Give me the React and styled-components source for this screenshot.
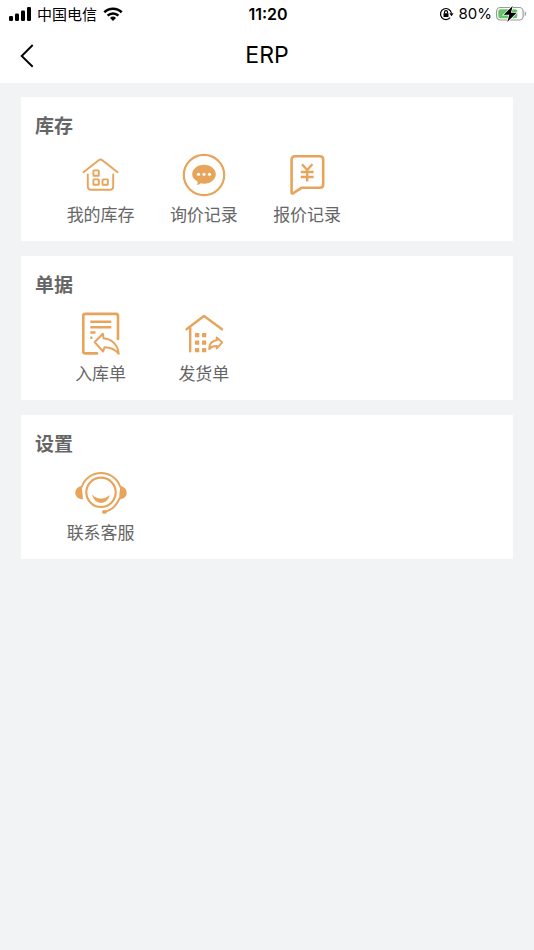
import React from "react";
import styled, { createGlobalStyle } from "styled-components";

const GlobalStyle = createGlobalStyle`
  * {
    box-sizing: border-box;
  }
  body {
    margin: 0;
    background: #f1f3f5;
    font-family: Inter, "Noto Sans CJK SC", sans-serif;
  }
`;

const Header = styled.header`
  background: white;
  color: black;
`;

const StatusBar = styled.div`
  display: grid;
  grid-template-columns: 1fr auto 1fr;
  align-items: center;
  height: 28px;
  padding: 0 7px 0 9px;
`;

const StatusGroup = styled.div`
  display: flex;
  align-items: center;
  gap: ${(props) => props.$gap}px;
  justify-content: ${(props) => (props.$end ? "flex-end" : "flex-start")};
`;

const Carrier = styled.span`
  font-family: "Noto Sans CJK SC", sans-serif;
  font-size: 15px;
  line-height: 20px;
`;

const Clock = styled.span`
  font-size: 16px;
  font-weight: 600;
  line-height: 20px;
`;

const Percent = styled.span`
  font-size: 15px;
  line-height: 20px;
`;

const NavBar = styled.div`
  display: grid;
  grid-template-columns: 1fr auto 1fr;
  align-items: center;
  height: 55px;
  padding: 0 16px 2px;
`;

const BackButton = styled.button`
  display: flex;
  justify-self: start;
  padding: 0;
  border: none;
  background: none;
  cursor: pointer;
`;

const PageTitle = styled.h1`
  margin: 0;
  font-size: 23px;
  font-weight: 400;
  line-height: 28px;
`;

const Main = styled.main`
  display: flex;
  flex-direction: column;
  gap: 15px;
  padding: 14px 21px;
`;

const Card = styled.section`
  padding: 14px 0 15px;
  background: white;
`;

const CardTitle = styled.h2`
  margin: 0 0 10px;
  padding: 0 14px;
  color: #666;
  font-family: "Noto Sans CJK SC", sans-serif;
  font-size: 19px;
  font-weight: 700;
  line-height: 28px;
`;

const Menu = styled.nav`
  display: grid;
  grid-template-columns: repeat(4, 1fr);
  padding: 0 51px 0 28px;
`;

const MenuLink = styled.a`
  display: flex;
  flex-direction: column;
  align-items: center;
  gap: 1px;
  color: #666;
  text-decoration: none;
`;

const MenuIcon = styled.svg`
  width: 60px;
  height: 52px;
  color: #e8a45b;
  fill: none;
  stroke: currentColor;
  stroke-linecap: round;
  stroke-linejoin: round;
`;

const MenuLabel = styled.span`
  font-family: "Noto Sans CJK SC", sans-serif;
  font-size: 17px;
  line-height: 24px;
  white-space: nowrap;
`;

const icons = {
  stock: (
    <g strokeWidth="1.9">
      <path d="M12.5 23.2 28 11q1.5-1.2 3 0l15.6 12.2" />
      <path d="M16.8 25.5v12q0 3.2 3.2 3.2h19q3.2 0 3.2-3.2v-12" />
      <rect x="22.4" y="21.4" width="5.4" height="5.4" rx="0.6" />
      <rect x="22.4" y="30.4" width="5.4" height="5.4" rx="0.6" />
      <rect x="31.5" y="30.4" width="5.4" height="5.4" rx="0.6" />
    </g>
  ),
  inquiry: (
    <>
      <circle cx="30" cy="26" r="20.2" strokeWidth="2.2" />
      <path
        d="M30 15.7c6.5 0 11.8 4.2 11.8 9.5S36.5 34.7 30 34.7c-1.3 0-2.3-.1-3.3-.4-1 1-2.2 1.500-3.900 1.500.8-.9 1-2.100.8-3.300-3.200-1.700-5.400-4.300-5.400-7.300 0-5.300 5.300-9.500 11.800-9.500z"
        fill="currentColor"
        stroke="none"
      />
      <g fill="white" stroke="none">
        <circle cx="24.5" cy="25.3" r="1.6" />
        <circle cx="30" cy="25.3" r="1.6" />
        <circle cx="35.5" cy="25.3" r="1.6" />
      </g>
    </>
  ),
  quote: (
    <>
      <path
        d="M17.8 7.3h25.200q3.200 0 3.200 3.200v25q0 3.200-3.200 3.200H24.800L16 44.300q-1.400.7-1.400-1V10.500q0-3.200 3.200-3.200z"
        strokeWidth="2.6"
      />
      <path
        d="M25 15.2l5.2 5.8 5.2-5.8M30.2 21v11.5M23.8 23h12.800M23.800 28h12.800"
        strokeWidth="2.4"
        strokeLinecap="butt"
      />
    </>
  ),
  inbound: (
    <>
      <path
        d="M47 31V7.900q0-2-2-2H14.300q-2 0-2 2v35.500q0 2 2 2H26"
        strokeWidth="2.6"
      />
      <path
        d="M19.3 13.7h21M19.3 19.3h21M19.3 24.5h5.200M19.300 29.800h2.200"
        strokeWidth="2.4"
        strokeLinecap="butt"
      />
      <path
        d="M23.6 34.2 31.8 25.7l.8 4.600c7.500.6 14.400 6.200 15.100 15.500-3.500-4.600-8.500-6.500-14.200-6.600l-1.400 4.300z"
        strokeWidth="2"
      />
    </>
  ),
  outbound: (
    <>
      <path
        d="M12.5 21.3 30 8l18 13.3M16.2 19v24.3"
        strokeWidth="2.4"
      />
      <g fill="currentColor" stroke="none">
        <rect x="21" y="25" width="4.3" height="4.3" rx="0.5" />
        <rect x="28" y="25" width="4.3" height="4.3" rx="0.5" />
        <rect x="21" y="32.5" width="4.3" height="4.3" rx="0.5" />
        <rect x="28" y="32.5" width="4.3" height="4.3" rx="0.5" />
        <rect x="21" y="40" width="4.3" height="4.3" rx="0.5" />
        <rect x="28" y="40" width="4.3" height="4.3" rx="0.5" />
      </g>
      <path
        d="M48.2 34.4 42.8 29.5v2.800c-4.500.4-7.500 3.600-7.600 8.700 2-2.200 4.400-3 7.600-2.900v2.300z"
        strokeWidth="2"
      />
    </>
  ),
  service: (
    <>
      <circle cx="30" cy="25.3" r="14.7" strokeWidth="2.2" />
      <path
        d="M10.8 19.7a20.3 20.3 0 0 1 38.4 0M48.4 31.6C45.5 38.5 40.5 43.4 33.5 44.8"
        strokeWidth="2"
      />
      <g fill="currentColor" stroke="none">
        <path d="M10.8 19 12 32.3C7.5 32.3 4.3 29.6 4.3 26s2.5-6.5 6.5-7z" />
        <path d="M49.2 19 48 32.3c4.5 0 7.7-2.7 7.700-6.300s-2.500-6.500-6.500-7z" />
        <ellipse cx="33.4" cy="44.9" rx="2.5" ry="1.9" />
      </g>
      <path
        d="M21.8 28.8c5.300 4.400 11.100 4.400 16.400 0-1.400 4.500-4.300 6.700-8.200 6.700s-6.800-2.200-8.200-6.700z"
        fill="currentColor"
        strokeWidth="0.8"
      />
    </>
  ),
};

const sections = [
  {
    title: "库存",
    items: [
      { label: "我的库存", icon: "stock" },
      { label: "询价记录", icon: "inquiry" },
      { label: "报价记录", icon: "quote" },
    ],
  },
  {
    title: "单据",
    items: [
      { label: "入库单", icon: "inbound" },
      { label: "发货单", icon: "outbound" },
    ],
  },
  {
    title: "设置",
    items: [{ label: "联系客服", icon: "service" }],
  },
];

const SignalIcon = () => (
  <svg width="22" height="14" viewBox="0 0 22 14" aria-hidden="true">
    <rect x="0" y="9" width="4" height="5" rx="1.2" />
    <rect x="6" y="6.5" width="4" height="7.5" rx="1.2" />
    <rect x="12" y="3.5" width="4" height="10.5" rx="1.2" />
    <rect x="18" y="0" width="4" height="14" rx="1.2" />
  </svg>
);

const WifiIcon = () => (
  <svg width="20" height="14" viewBox="0 0 20 14" aria-hidden="true">
    <g fill="none" stroke="black" strokeWidth="2.6">
      <path d="M1.3 5.2a12.5 12.5 0 0 1 17.4 0" />
      <path d="M4.6 8.6a7.8 7.8 0 0 1 10.8 0" />
    </g>
    <path d="M10 14 7 11a4.3 4.3 0 0 1 6 0z" />
  </svg>
);

const RotationLockIcon = () => (
  <svg width="16" height="14" viewBox="0 0 16 14" aria-hidden="true">
    <g fill="none" stroke="black" strokeWidth="1.2">
      <path d="M12.4 6A5.5 5.5 0 1 0 11.2 10.6" />
      <path d="M5.5 6.5V5.1a1.5 1.5 0 0 1 3 0v1.400" />
    </g>
    <rect x="4.5" y="6.2" width="5" height="3.8" rx="0.6" />
    <path d="M10.3 6.2h4.300l-2.100 3z" />
  </svg>
);

const BatteryIcon = () => (
  <svg width="31" height="18" viewBox="0 0 31 18" aria-hidden="true">
    <rect
      x="0.6"
      y="2.5"
      width="26.5"
      height="12.5"
      rx="3.8"
      fill="none"
      stroke="#9b9b9b"
      strokeWidth="1.2"
    />
    <rect x="2.3" y="4.2" width="19" height="9.1" rx="2.2" fill="#65c466" />
    <path d="M28.7 6.2q3 2.600 0 5.200z" fill="#9b9b9b" />
    <path
      d="M16.7 1 7.7 9.7h5.600l-2 7.200L20.700 7.700h-5.800z"
      stroke="white"
      strokeWidth="1.4"
      paintOrder="stroke"
    />
  </svg>
);

const App = () => {
  return (
    <>
      <GlobalStyle />
      <Header>
        <StatusBar>
          <StatusGroup $gap={6}>
            <SignalIcon />
            <Carrier>中国电信</Carrier>
            <WifiIcon />
          </StatusGroup>
          <Clock>11:20</Clock>
          <StatusGroup $gap={4} $end>
            <RotationLockIcon />
            <Percent>80%</Percent>
            <BatteryIcon />
          </StatusGroup>
        </StatusBar>
        <NavBar>
          <BackButton type="button" aria-label="返回">
            <svg width="22" height="28" viewBox="0 0 22 28">
              <path
                d="M16.7 4 5.7 15l11 10.700"
                fill="none"
                stroke="black"
                strokeWidth="1.9"
              />
            </svg>
          </BackButton>
          <PageTitle>ERP</PageTitle>
        </NavBar>
      </Header>
      <Main>
        {sections.map((section) => (
          <Card key={section.title}>
            <CardTitle>{section.title}</CardTitle>
            <Menu aria-label={section.title}>
              {section.items.map((item) => (
                <MenuLink key={item.label} href={`#${item.icon}`}>
                  <MenuIcon viewBox="0 0 60 52" aria-hidden="true">
                    {icons[item.icon]}
                  </MenuIcon>
                  <MenuLabel>{item.label}</MenuLabel>
                </MenuLink>
              ))}
            </Menu>
          </Card>
        ))}
      </Main>
    </>
  );
};

export default App;
